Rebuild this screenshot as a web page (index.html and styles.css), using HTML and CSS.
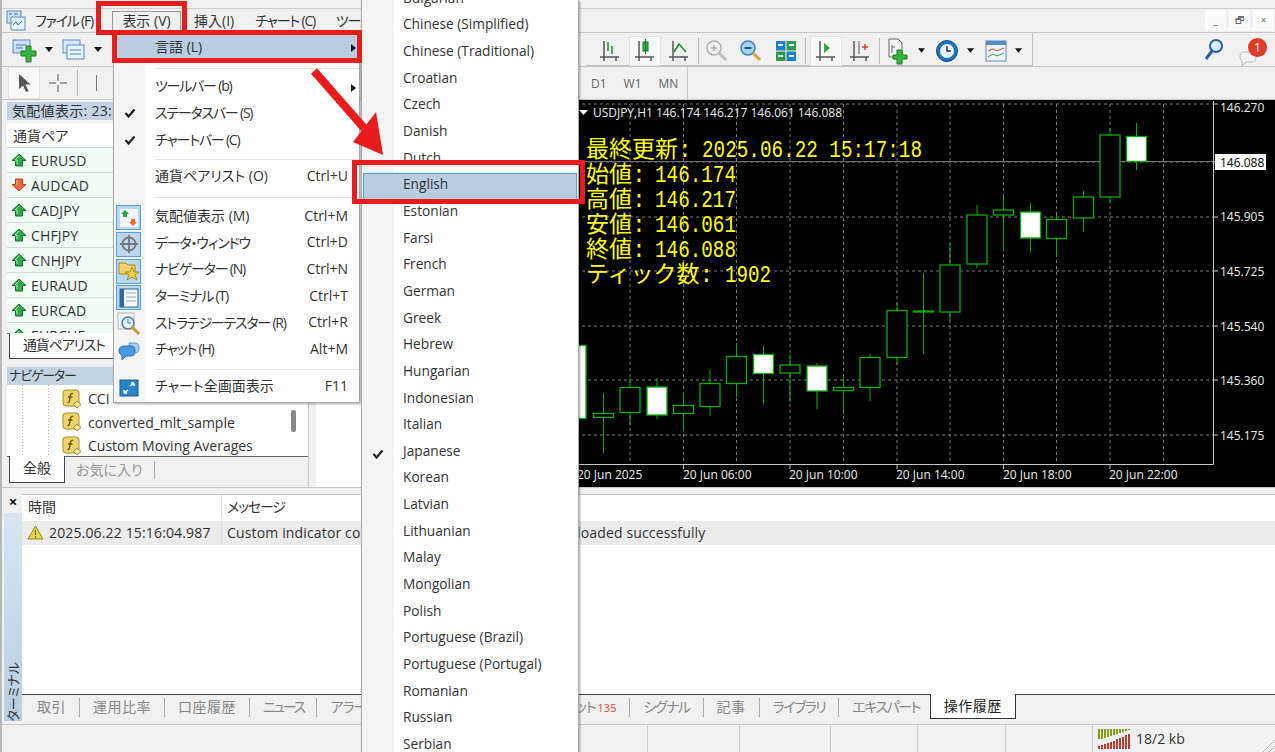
FILE: index.html
```html
<!DOCTYPE html>
<html lang="ja">
<head>
    <meta charset="UTF-8">
    <meta name="viewport" content="width=device-width, initial-scale=1.0">
    <title>MetaTrader</title>
    <link rel="stylesheet" href="styles.css">
</head>
<body>
<svg class="defs" width="0" height="0">
    <defs>
        <symbol id="arrow-up" viewBox="0 0 16 14"><path d="M8 1 15 7.500H11.500V13H4.500V7.500H1Z" fill="#2ea84a" stroke="#14702c"/><path d="M8 3 4 7H6V11" fill="none" stroke="#a8e8b0"/></symbol>
        <symbol id="arrow-down" viewBox="0 0 16 14"><path d="M8 13 15 6.500H11.500V1H4.500V6.500H1Z" fill="#ec6a3a" stroke="#b8401c"/><path d="M6 2V7" fill="none" stroke="#f8b898"/></symbol>
        <symbol id="func" viewBox="0 0 20 20"><rect x="1" y="1" width="16" height="16" rx="3" fill="#f0d468" stroke="#a88a28"/><path d="M11 4.500C8.500 4 8.500 6 8 9C7.500 12 7.500 14 5.500 13.500M6 8H10.500" fill="none" stroke="#6a5a18" stroke-width="1.400"/><path d="M15 12 19 15.500 15 19 11.500 15.500Z" fill="#f6e6a0" stroke="#a88a28"/></symbol>
        <symbol id="chart-axes" viewBox="0 0 22 22"><path d="M5 1V18M1 17H20M5 17V21M17 17V21" fill="none" stroke="#555" stroke-width="1.500"/></symbol>
        <symbol id="drop" viewBox="0 0 8 5"><path d="M0 0H8L4 5Z" fill="#111"/></symbol>
    </defs>
</svg>

<div class="app">
    <div class="title-strip"></div>

    <div class="menubar">
        <svg class="app-logo" width="22" height="22" viewBox="0 0 22 22"><rect x="2" y="1" width="14" height="12" fill="#cfe2f4" stroke="#5a8cc0"/><rect x="6" y="7" width="14" height="13" fill="#e8f2fb" stroke="#5a8cc0"/><path d="M8 15 11 12 13 15 17 11" fill="none" stroke="#3a70a8"/><path d="M4 4H7M9 4H13" stroke="#3a70a8"/></svg>
        <span class="menu-title file kana">ファイル (F)</span>
        <span class="menu-title open">表示 (V)</span>
        <span class="menu-title insert">挿入(I)</span>
        <span class="menu-title kana">チャート (C)</span>
        <span class="menu-title kana">ツール (T)</span>
        <div class="window-btns">
            <span class="window-btn">_</span>
            <span class="window-btn">🗗</span>
            <span class="window-btn">×</span>
        </div>
    </div>

    <div class="toolbar">
        <div class="tool-group">
            <svg class="tool tool-wide" width="26" height="26" viewBox="0 0 26 26"><rect x="2" y="3" width="17" height="13" fill="#cfe2f4" stroke="#5a8cc0"/><path d="M5 8H15M5 11H12" stroke="#4a7cb0"/><path d="M15 9H20V14H25V19H20V25H15V19H10V14H15Z" fill="#35b53a" stroke="#1e7c24"/></svg>
            <svg class="drop" width="8" height="5"><use href="#drop"/></svg>
            <svg class="tool tool-wide" width="24" height="24" viewBox="0 0 24 24"><rect x="1" y="2" width="17" height="13" fill="#d8e8f6" stroke="#5a8cc0"/><rect x="5" y="7" width="17" height="14" fill="#e8f2fb" stroke="#5a8cc0"/><path d="M8 12H19M8 16H19" stroke="#4a7cb0"/></svg>
            <svg class="drop" width="8" height="5"><use href="#drop"/></svg>
        </div>
        <div class="tool-right">
            <div class="tool-group chart-tools">
                <svg class="ct ct-a" width="22" height="24"><use href="#chart-axes"/><path d="M9 3V12M13 7V15" stroke="#1a8a2a" stroke-width="1.500"/></svg>
                <span class="ct-on ct-b"><svg width="22" height="24"><use href="#chart-axes"/><rect x="9" y="3" width="5" height="9" fill="#3ab54a" stroke="#14702c"/><path d="M11.500 0V15" stroke="#14702c"/></svg></span>
                <svg class="ct ct-c" width="22" height="24"><use href="#chart-axes"/><path d="M6 13 11 5 18 13" fill="none" stroke="#1a8a2a" stroke-width="1.500"/></svg>
                <i class="vsep"></i>
                <svg class="ct ct-d" width="24" height="24" viewBox="0 0 24 24"><circle cx="9" cy="9" r="7" fill="#f4f4f4" stroke="#b0b0b0" stroke-width="1.500"/><path d="M6 9H12M9 6V12" stroke="#b0b0b0" stroke-width="1.500"/><path d="M14 14 21 21" stroke="#c0c0c0" stroke-width="3"/></svg>
                <svg class="ct ct-e" width="24" height="24" viewBox="0 0 24 24"><circle cx="9" cy="9" r="7" fill="#a8d4f4" stroke="#3a80c0" stroke-width="1.500"/><path d="M5.500 9H12.500" stroke="#1a5a9a" stroke-width="2"/><path d="M14 14 21 21" stroke="#d8a838" stroke-width="3"/></svg>
                <svg class="ct ct-f" width="22" height="22" viewBox="0 0 22 22"><rect x="1" y="1" width="9.500" height="9.500" fill="#1f7fc8"/><rect x="11.500" y="1" width="9.500" height="9.500" fill="#2f9a4a"/><rect x="1" y="11.500" width="9.500" height="9.500" fill="#2f9a4a"/><rect x="11.500" y="11.500" width="9.500" height="9.500" fill="#1f7fc8"/><path d="M3 5H8M14 5H19M3 16H8M14 16H19" stroke="#dff" stroke-width="2"/></svg>
                <i class="vsep grip"></i>
                <span class="ct-on ct-g"><svg width="22" height="24"><use href="#chart-axes"/><path d="M9 4 15 9 9 14Z" fill="#2fa53f"/></svg></span>
                <svg class="ct ct-h" width="22" height="24"><use href="#chart-axes"/><path d="M10 2V15" stroke="#555"/><path d="M13 8H19M16 5V11" stroke="#d04a2a" stroke-width="1.500"/></svg>
                <i class="vsep"></i>
                <svg class="ct ct-i" width="24" height="28" viewBox="0 0 24 28"><path d="M3 2H12L16 6V20H3Z" fill="#f4f4f4" stroke="#666"/><path d="M6 8V16M6 10H9" stroke="#666"/><path d="M11 13H16V18H21V22H16V27H11V22H7V18H11Z" fill="#35b53a" stroke="#1e7c24"/></svg>
                <svg class="drop" width="7" height="5"><use href="#drop"/></svg>
                <svg class="ct ct-j" width="24" height="24" viewBox="0 0 24 24"><circle cx="12" cy="12" r="10.500" fill="#1f74b8" stroke="#134a80"/><circle cx="12" cy="12" r="7" fill="#e8f2fb"/><path d="M12 7V12H16" fill="none" stroke="#334" stroke-width="1.500"/></svg>
                <svg class="drop" width="7" height="5"><use href="#drop"/></svg>
                <svg class="ct ct-k" width="22" height="22" viewBox="0 0 22 22"><rect x="1" y="1" width="20" height="20" fill="#f0f4f8" stroke="#5a8cc0"/><rect x="1" y="1" width="20" height="4" fill="#5a8cc0"/><path d="M3 11 8 9 12 11 19 8" fill="none" stroke="#c05030"/><path d="M3 17 8 14 12 16 19 13" fill="none" stroke="#3aa04a"/></svg>
                <svg class="drop" width="7" height="5"><use href="#drop"/></svg>
            </div>
            <svg class="search-icon" width="22" height="24" viewBox="0 0 22 24"><circle cx="13" cy="8" r="6" fill="#dcecfa" stroke="#2a5fa8" stroke-width="2"/><path d="M9 13 3 21" stroke="#2a5fa8" stroke-width="3"/></svg>
            <div class="chat-badge">
                <svg width="20" height="20" viewBox="0 0 20 20"><path d="M4 4H13Q17 4 17 9T13 14H7L3 18V13Q1 11 1 9 1 4 4 4Z" fill="#eef2f4" stroke="#b8c0c4"/></svg>
                <span class="badge-dot">1</span>
            </div>
        </div>
    </div>

    <div class="toolbar toolbar-second">
        <span class="ct-on pointer"><svg width="16" height="20" viewBox="0 0 16 20"><path d="M3 1V16L7 12.500 10 19 12.500 18 9.500 11.500H14.500Z" fill="#555"/></svg></span>
        <svg class="crosshair" width="20" height="20" viewBox="0 0 20 20"><path d="M10 1V8M10 12V19M1 10H8M12 10H19" stroke="#888" stroke-width="1.500"/></svg>
        <i class="vsep"></i>
        <span class="draw-line"></span>
        <div class="periods">
            <span>D1</span><span>W1</span><span>MN</span>
        </div>
    </div>

    <div class="main">
        <div class="dock">
            <section class="watch">
                <div class="panel-title">気配値表示: 23:17:18</div>
                <div class="watch-table">
                    <div class="watch-head">通貨ペア</div>
                    <div class="watch-row"><svg width="16" height="14"><use href="#arrow-up"/></svg>EURUSD</div>
                    <div class="watch-row"><svg width="16" height="14"><use href="#arrow-down"/></svg>AUDCAD</div>
                    <div class="watch-row"><svg width="16" height="14"><use href="#arrow-up"/></svg>CADJPY</div>
                    <div class="watch-row"><svg width="16" height="14"><use href="#arrow-up"/></svg>CHFJPY</div>
                    <div class="watch-row"><svg width="16" height="14"><use href="#arrow-up"/></svg>CNHJPY</div>
                    <div class="watch-row"><svg width="16" height="14"><use href="#arrow-up"/></svg>EURAUD</div>
                    <div class="watch-row"><svg width="16" height="14"><use href="#arrow-up"/></svg>EURCAD</div>
                    <div class="watch-row"><svg width="16" height="14"><use href="#arrow-up"/></svg>EURCHF</div>
                </div>
                <div class="dock-tabs">
                    <span class="dock-tab active wide kana">通貨ペアリスト</span>
                </div>
            </section>
            <section class="navigator">
                <div class="panel-title nav-title kana">ナビゲーター</div>
                <div class="nav-tree">
                    <div class="nav-row"><svg width="20" height="20"><use href="#func"/></svg>CCI</div>
                    <div class="nav-row"><svg width="20" height="20"><use href="#func"/></svg>converted_mlt_sample</div>
                    <div class="nav-row"><svg width="20" height="20"><use href="#func"/></svg>Custom Moving Averages</div>
                    <span class="nav-thumb"></span>
                </div>
                <div class="dock-tabs">
                    <span class="dock-tab active">全般</span>
                    <span class="dock-tab">お気に入り</span>
                </div>
            </section>
        </div>
        <div class="blank-pane"></div>
        <div class="chart">
            <svg width="699" height="387" viewBox="576 100 699 387">
                <g class="grid">
                    <path d="M576 104H1213M576 162H1213M576 217H1213M576 271H1213M576 326H1213M576 380H1213M576 435H1213"/>
                    <path d="M630 104V464M683.500 104V464M736.500 104V464M790 104V464M843.500 104V464M897 104V464M950 104V464M1003.500 104V464M1056.500 104V464M1110 104V464M1163.500 104V464"/>
                </g>
                <path class="price-line" d="M576 161.500H1213"/>
                <path class="wick" d="M603.500 393V453M630 378V425M657 378V419M683.500 392V430M710 369V416M736.500 343V397M763.500 346V404M790 354V402M817 363V409M843.500 378V414M870 354V401M897 303V365M923.500 273V354M950 243V320M977 205V268M1003.500 196V251M1030.500 203V252M1056.500 215V255M1083.500 191V232M1110 128V203M1136.500 123V170"/>
                <g class="bear">
                    <rect x="566" y="345.500" width="20" height="73"/>
                    <rect x="647" y="387" width="20" height="28"/>
                    <rect x="753.500" y="354.500" width="20" height="19"/>
                    <rect x="807" y="366" width="20" height="25"/>
                    <rect x="1020.500" y="212" width="20" height="26"/>
                    <rect x="1126.500" y="136.500" width="20" height="25"/>
                </g>
                <g class="bull">
                    <rect x="593.500" y="413.500" width="20" height="4"/>
                    <rect x="620" y="387.500" width="20" height="25"/>
                    <rect x="673.500" y="405.500" width="20" height="8"/>
                    <rect x="700" y="383.500" width="20" height="23"/>
                    <rect x="726.500" y="356.500" width="20" height="27"/>
                    <rect x="780" y="365" width="20" height="8"/>
                    <rect x="833.500" y="387.500" width="20" height="3"/>
                    <rect x="860" y="357.500" width="20" height="30"/>
                    <rect x="887" y="310.500" width="20" height="47"/>
                    <rect x="913.500" y="311" width="20" height="1"/>
                    <rect x="940" y="265" width="20" height="47"/>
                    <rect x="967" y="215" width="20" height="49"/>
                    <rect x="993.500" y="210" width="20" height="5"/>
                    <rect x="1046.500" y="219.500" width="20" height="19"/>
                    <rect x="1073.500" y="197" width="20" height="21"/>
                    <rect x="1100" y="135" width="20" height="62"/>
                </g>
                <path class="axis" d="M1213.500 101V464.500H576M1213 104H1218M1213 162H1218M1213 217H1218M1213 271H1218M1213 326H1218M1213 380H1218M1213 435H1218M683.500 464V469M790 464V469M897 464V469M1003.500 464V469M1110 464V469"/>
                <path class="header-mark" d="M579 110H588L583.500 115Z"/>
                <text class="chart-label" x="593" y="117" textLength="249">USDJPY,H1  146.174 146.217 146.061 146.088</text>
                <g class="chart-label">
                    <text x="1220" y="112">146.270</text>
                    <text x="1220" y="221">145.905</text>
                    <text x="1220" y="276">145.725</text>
                    <text x="1220" y="331">145.540</text>
                    <text x="1220" y="385">145.360</text>
                    <text x="1220" y="440">145.175</text>
                    <text x="577" y="479">20 Jun 2025</text>
                    <text x="683" y="479">20 Jun 06:00</text>
                    <text x="789" y="479">20 Jun 10:00</text>
                    <text x="896" y="479">20 Jun 14:00</text>
                    <text x="1003" y="479">20 Jun 18:00</text>
                    <text x="1109" y="479">20 Jun 22:00</text>
                </g>
                <rect class="price-box" x="1215" y="154" width="51" height="16"/>
                <text class="price-text" x="1220" y="166.500">146.088</text>
                <g class="info">
                    <text x="586" y="157">最終更新:</text>
                    <text x="702" y="157" textLength="220" lengthAdjust="spacingAndGlyphs">2025.06.22 15:17:18</text>
                    <text x="586" y="182">始値:</text>
                    <text x="655" y="182" textLength="81" lengthAdjust="spacingAndGlyphs">146.174</text>
                    <text x="586" y="207">高値:</text>
                    <text x="655" y="207" textLength="81" lengthAdjust="spacingAndGlyphs">146.217</text>
                    <text x="586" y="232">安値:</text>
                    <text x="655" y="232" textLength="81" lengthAdjust="spacingAndGlyphs">146.061</text>
                    <text x="586" y="257">終値:</text>
                    <text x="655" y="257" textLength="81" lengthAdjust="spacingAndGlyphs">146.088</text>
                    <text x="586" y="282" class="full">ティック数:</text>
                    <text x="725" y="282" textLength="46" lengthAdjust="spacingAndGlyphs">1902</text>
                </g>
            </svg>
        </div>
    </div>

    <div class="terminal">
        <div class="term-side">
            <span class="term-close">×</span>
            <div class="term-label"><span>ターミナル</span></div>
        </div>
        <div class="term-body">
            <div class="log-head">
                <span class="col-time">時間</span>
                <span class="col-msg kana">メッセージ</span>
            </div>
            <div class="log-row">
                <span class="col-time">
                    <svg width="17" height="15" viewBox="0 0 17 15"><path d="M8.500 1 16 14H1Z" fill="#e4d83c" stroke="#8c8a20"/><path d="M8.500 5V10M8.500 11V13" stroke="#555"/></svg>
                    2025.06.22 15:16:04.987
                </span>
                <span class="col-msg"><span class="msg-start">Custom indicator converted_mlt_sample</span>loaded successfully</span>
            </div>
            <div class="log-empty"></div>
            <div class="term-tabs">
                <span class="term-tab">取引</span>
                <span class="term-tab">運用比率</span>
                <span class="term-tab">口座履歴</span>
                <span class="term-tab news">ニュース</span>
                <span class="term-tab hidden-tab">アラート</span>
                <span class="term-tab chat-tab">チャット<b>135</b></span>
                <span class="term-tab tight">シグナル</span>
                <span class="term-tab">記事</span>
                <span class="term-tab tight">ライブラリ</span>
                <span class="term-tab tight last">エキスパート</span>
                <span class="term-tab active">操作履歴</span>
            </div>
        </div>
    </div>

    <div class="statusbar">
        <span class="status-cell"></span>
        <span class="status-cell"></span>
        <span class="status-cell"></span>
        <span class="status-cell"></span>
        <span class="status-cell"></span>
        <span class="status-cell net">
            <svg width="34" height="24" viewBox="0 0 34 24"><path d="M2 2V12M5 2V12M8 2V11M11 2V10M14 2V9M17 2V8M20 2V7M23 2V6M26 2V5M29 2V4M32 2V3" stroke="#7a9400" stroke-width="1.800"/><path d="M2 19V22M5 18V22M8 17V22M11 16V22M14 15V22M17 14V22M20 12V22M23 11V22M26 10V22M29 8V22M32 7V22" stroke="#a82a1a" stroke-width="1.800"/></svg>
            18/2 kb
        </span>
        <span class="resize-grip"></span>
    </div>

    <!-- 表示メニュー -->
    <div class="menu view-menu">
        <div class="menu-row current"><span class="menu-label">言語 (L)</span><i class="sub-arrow"></i></div>
        <div class="menu-sep"></div>
        <div class="menu-row"><span class="menu-label kana">ツールバー (b)</span><i class="sub-arrow"></i></div>
        <div class="menu-row">
            <svg class="check" width="12" height="10" viewBox="0 0 12 10"><path d="M1.500 5 4.500 8.500 10.500 1.500" fill="none" stroke="#222" stroke-width="2.200"/></svg>
            <span class="menu-label kana">ステータスバー (S)</span>
        </div>
        <div class="menu-row">
            <svg class="check" width="12" height="10" viewBox="0 0 12 10"><path d="M1.500 5 4.500 8.500 10.500 1.500" fill="none" stroke="#222" stroke-width="2.200"/></svg>
            <span class="menu-label kana">チャートバー (C)</span>
        </div>
        <div class="menu-sep short"></div>
        <div class="menu-row"><span class="menu-label">通貨ペアリスト (O)</span><span class="shortcut">Ctrl+U</span></div>
        <div class="menu-sep"></div>
        <div class="menu-row">
            <span class="menu-icon boxed"><svg width="20" height="20" viewBox="0 0 20 20"><rect x="1" y="1" width="18" height="18" fill="#f4f8fb"/><path d="M6 2 10 6H8V9H4V6H2Z" fill="#2ea84a"/><path d="M14 18 10 14H12V11H16V14H18Z" fill="#ec6a3a"/></svg></span>
            <span class="menu-label">気配値表示 (M)</span><span class="shortcut">Ctrl+M</span>
        </div>
        <div class="menu-row">
            <span class="menu-icon boxed"><svg width="20" height="20" viewBox="0 0 20 20"><circle cx="10" cy="10" r="6.500" fill="none" stroke="#777" stroke-width="1.800"/><path d="M10 1V19M1 10H19" stroke="#777" stroke-width="1.800"/></svg></span>
            <span class="menu-label kana">データ・ウィンドウ</span><span class="shortcut">Ctrl+D</span>
        </div>
        <div class="menu-row">
            <span class="menu-icon boxed"><svg width="22" height="22" viewBox="0 0 22 22"><path d="M1 3H8L10 5H17V14H1Z" fill="#f0d468" stroke="#a88a28"/><path d="M14 7 16 12H21L17 15 19 20 14 17 9 20 11 15 7 12H12Z" fill="#f4d43c" stroke="#a88a28"/></svg></span>
            <span class="menu-label kana">ナビゲーター (N)</span><span class="shortcut">Ctrl+N</span>
        </div>
        <div class="menu-row">
            <span class="menu-icon boxed"><svg width="20" height="20" viewBox="0 0 20 20"><rect x="1" y="1" width="18" height="18" fill="#f4f8fb" stroke="#2a6aa8"/><rect x="1" y="1" width="4" height="18" fill="#2a6aa8"/><path d="M7 5H17M7 9H17M7 13H17" stroke="#9ab"/></svg></span>
            <span class="menu-label kana">ターミナル (T)</span><span class="shortcut">Ctrl+T</span>
        </div>
        <div class="menu-row">
            <span class="menu-icon"><svg width="24" height="24" viewBox="0 0 24 24"><rect x="1" y="1" width="16" height="16" fill="#eef2f6" stroke="#b8b8b8"/><circle cx="11" cy="11" r="6" fill="#dcecfa" stroke="#5a7a9a" stroke-width="1.500"/><path d="M11 7V11H14" fill="none" stroke="#5a7a9a"/><path d="M15 15 22 22" stroke="#c89a38" stroke-width="3"/></svg></span>
            <span class="menu-label kana">ストラテジーテスター (R)</span><span class="shortcut">Ctrl+R</span>
        </div>
        <div class="menu-row">
            <span class="menu-icon"><svg width="22" height="22" viewBox="0 0 22 22"><path d="M11 3H17Q21 3 21 8T17 13H11Z" fill="#a8d0f0" stroke="#5a98d0"/><path d="M6 6H13Q17 6 17 11T13 16H8L4 20V15Q1 14 1 11 1 6 6 6Z" fill="#4a9ade" stroke="#2a70b0"/></svg></span>
            <span class="menu-label kana">チャット (H)</span><span class="shortcut">Alt+M</span>
        </div>
        <div class="menu-sep short"></div>
        <div class="menu-row">
            <span class="menu-icon"><svg width="20" height="18" viewBox="0 0 20 18"><rect x="1" y="1" width="18" height="16" fill="#2a82c8" stroke="#1a5a98"/><path d="M11 7 15 4M15 4H12M15 4V7M9 11 5 14M5 14H8M5 14V11" stroke="#fff" stroke-width="1.400" fill="none"/></svg></span>
            <span class="menu-label">チャート全画面表示</span><span class="shortcut">F11</span>
        </div>
    </div>

    <!-- 言語サブメニュー -->
    <div class="menu lang-menu">
        <div class="lang-list">
            <div class="lang-row">Bulgarian</div>
            <div class="lang-row">Chinese (Simplified)</div>
            <div class="lang-row">Chinese (Traditional)</div>
            <div class="lang-row">Croatian</div>
            <div class="lang-row">Czech</div>
            <div class="lang-row">Danish</div>
            <div class="lang-row">Dutch</div>
            <div class="lang-row current">English</div>
            <div class="lang-row">Estonian</div>
            <div class="lang-row">Farsi</div>
            <div class="lang-row">French</div>
            <div class="lang-row">German</div>
            <div class="lang-row">Greek</div>
            <div class="lang-row">Hebrew</div>
            <div class="lang-row">Hungarian</div>
            <div class="lang-row">Indonesian</div>
            <div class="lang-row">Italian</div>
            <div class="lang-row">
                <svg class="check" width="12" height="10" viewBox="0 0 12 10"><path d="M1.500 5 4.500 8.500 10.500 1.500" fill="none" stroke="#222" stroke-width="2.200"/></svg>
                Japanese
            </div>
            <div class="lang-row">Korean</div>
            <div class="lang-row">Latvian</div>
            <div class="lang-row">Lithuanian</div>
            <div class="lang-row">Malay</div>
            <div class="lang-row">Mongolian</div>
            <div class="lang-row">Polish</div>
            <div class="lang-row">Portuguese (Brazil)</div>
            <div class="lang-row">Portuguese (Portugal)</div>
            <div class="lang-row">Romanian</div>
            <div class="lang-row">Russian</div>
            <div class="lang-row">Serbian</div>
        </div>
    </div>

    <!-- 赤枠と矢印 -->
    <span class="callout callout-view"></span>
    <span class="callout callout-lang"></span>
    <span class="callout callout-english"></span>
    <svg class="callout-arrow" width="90" height="100" viewBox="0 0 90 100"><path d="M4 5 54 62" stroke="#e81c1c" stroke-width="8" fill="none"/><path d="M73 89 66 46 43 76Z" fill="#e81c1c"/></svg>
</div>
</body>
</html>
```

FILE: styles.css
```css
* {
    box-sizing: border-box;
}
html, body {
    margin: 0;
    height: 100%;
    overflow: hidden;
}
body {
    font-family: "Open Sans", "Noto Sans CJK JP", sans-serif;
    font-size: 14px;
    font-feature-settings: "palt";
    color: #333;
    background-color: #f0f0f0;
}
.defs {
    position: absolute;
}
.kana {
    letter-spacing: -1.200px;
}
.app {
    position: relative;
    width: 1275px;
    height: 752px;
    overflow: hidden;
    display: flex;
    flex-direction: column;
    background-color: #f0f0f0;
    border-left: 2px solid #b8b8b8;
}
.title-strip {
    height: 9px;
    border-bottom: 1px solid #d0d0d0;
}

/* menu bar */
.menubar {
    height: 24px;
    display: flex;
    align-items: center;
    border-bottom: 1px solid #c8c8c8;
}
.app-logo {
    margin: 0 8px 0 3px;
}
.menu-title {
    white-space: nowrap;
    margin-right: 21px;
    line-height: 18px;
}
.menu-title.file {
    width: 77px;
    margin-right: 0;
    overflow: hidden;
}
.menu-title.open {
    width: 69px;
    margin-right: 13px;
    text-align: center;
    border: 1px solid #999;
    border-bottom: none;
}
.menu-title.insert {
    margin-right: 21px;
}
.window-btns {
    margin-left: auto;
    display: flex;
    gap: 3px;
    padding-right: 1px;
    position: relative;
}
.window-btn {
    width: 21px;
    height: 21px;
    background-color: #fafafa;
    text-align: center;
    font-size: 10px;
    line-height: 20px;
    color: #666;
}

/* toolbars */
.toolbar {
    height: 34px;
    display: flex;
    align-items: center;
    border-bottom: 1px solid #c8c8c8;
}
.tool-group {
    display: flex;
    align-items: center;
}
.tool-wide {
    margin-left: 9px;
}
.drop {
    margin-left: 8px;
}
.tool-right {
    margin-left: auto;
    display: flex;
    align-items: center;
    height: 100%;
}
.chart-tools {
    height: 100%;
    width: 447px;
    margin-right: 242px;
    padding: 3px 0 0 13px;
    border-right: 1px solid #c0c0c0;
    border-bottom: 1px solid #c0c0c0;
}
.ct {
    flex: none;
}
.ct-on {
    width: 32px;
    height: 30px;
    display: flex;
    align-items: center;
    justify-content: center;
    background-color: #f8f8f8;
    border: 1px solid #e4e4e4;
}
.ct-a { margin-right: 8px; }
.ct-c { margin-left: 7px; }
.vsep {
    width: 1px;
    height: 26px;
    margin: 0 6px 0 8px;
    background-color: #b8b8b8;
}
.vsep.grip {
    margin: 0 4px 0 8px;
}
.ct-d { margin: 0 10px 0 0; }
.ct-e { margin: 0 12px 0 0; }
.ct-f { margin: 0; }
.ct-h { margin-left: 7px; }
.ct-j { margin-left: 10px; }
.ct-k { margin-left: 11px; }
.search-icon {
    position: absolute;
    right: 50px;
    top: 38px;
}
.chat-badge {
    position: absolute;
    right: 6px;
    top: 38px;
    width: 30px;
    height: 28px;
}
.chat-badge svg {
    position: absolute;
    left: 0;
    top: 10px;
}
.badge-dot {
    position: absolute;
    left: 9px;
    top: 0;
    width: 19px;
    height: 19px;
    border-radius: 50%;
    background-color: #e03a28;
    color: #fff;
    font-size: 13px;
    line-height: 19px;
    text-align: center;
}
.toolbar-second {
    height: 33px;
    padding-left: 6px;
}
.pointer {
    width: 32px;
    height: 32px;
}
.crosshair {
    margin-left: 8px;
}
.toolbar-second .vsep {
    margin: 0 18px 0 9px;
}
.draw-line {
    width: 1px;
    height: 16px;
    background-color: #777;
}
.periods {
    display: flex;
    gap: 17px;
    margin-left: 494px;
    padding-right: 9px;
    height: 100%;
    align-items: center;
    border-right: 1px solid #c8c8c8;
    font-size: 12px;
    color: #666;
}

/* main area */
.main {
    height: 387px;
    display: flex;
}
.dock {
    width: 307px;
    padding: 2px 0 0 5px;
    border-right: 1px solid #c8c8c8;
    flex: none;
}
.panel-title {
    height: 18px;
    line-height: 17px;
    padding-left: 5px;
    letter-spacing: 0.3px;
    background-color: #c4d3e2;
    white-space: nowrap;
    overflow: hidden;
}
.nav-title {
    font-size: 13px;
    padding-left: 2px;
    letter-spacing: -1.200px;
}
.watch {
    height: 256px;
    display: flex;
    flex-direction: column;
}
.watch-table {
    margin-top: 3px;
    flex: 1;
    overflow: hidden;
    background-color: #fff;
}
.watch-head {
    height: 25px;
    padding-left: 6px;
    line-height: 25px;
    border-bottom: 1px solid #d8d8d8;
}
.watch-row {
    height: 25px;
    display: flex;
    align-items: center;
    gap: 4px;
    padding-left: 4px;
    letter-spacing: 0.15px;
    background-color: #f0fbf6;
    border-bottom: 1px solid #d8d8d8;
}
.dock-tabs {
    height: 25px;
    display: flex;
    align-items: flex-start;
    flex: none;
    border-top: 1px solid #666;
}
.dock-tab {
    padding: 0 11px;
    color: #999;
    border-right: 1px solid #aaa;
    margin-top: 4px;
    height: 18px;
    line-height: 18px;
}
.dock-tab.active {
    margin: -1px 0 0 2px;
    height: 26px;
    line-height: 24px;
    padding: 0 12px;
    color: #333;
    background-color: #fff;
    border: 1px solid #444;
    border-top: none;
}
.dock-tab.wide {
    padding: 0 13px;
}
.navigator {
    margin-top: 9px;
}
.nav-tree {
    position: relative;
    height: 71px;
    padding: 2px 0 0 55px;
    background-color: #fff;
    background-image: linear-gradient(#bbb 50%, transparent 50%), linear-gradient(#bbb 50%, transparent 50%);
    background-size: 1px 3px;
    background-repeat: repeat-y;
    background-position: 15px 0, 41px 0;
    overflow: hidden;
}
.nav-row {
    height: 23.500px;
    display: flex;
    align-items: center;
    gap: 6px;
}
.nav-thumb {
    position: absolute;
    left: 284px;
    top: 25px;
    width: 5px;
    height: 22px;
    border-radius: 2px;
    background-color: #888;
}
.navigator .dock-tabs {
    height: 27px;
}
.navigator .dock-tab.active {
    width: 56px;
    height: 27px;
    text-align: center;
}
.blank-pane {
    width: 260px;
    margin-left: 7px;
    background-color: #fff;
    flex: none;
}
.chart {
    flex: 1;
    background-color: #000;
    overflow: hidden;
}
.chart svg {
    display: block;
    font-family: "Open Sans", sans-serif;
}
.grid path {
    fill: none;
    stroke: #7c7c7c;
    stroke-dasharray: 3 3;
}
.price-line {
    stroke: #66706f;
}
.wick {
    stroke: #00b000;
    fill: none;
}
.bear rect {
    fill: #fff;
    stroke: #00b000;
    stroke-width: 1.300;
}
.bull rect {
    fill: #000;
    stroke: #00b000;
    stroke-width: 1.300;
}
.axis {
    fill: none;
    stroke: #c8c8c8;
}
.header-mark {
    fill: #fff;
}
.chart-label {
    fill: #eee;
    font-size: 12px;
}
.price-box {
    fill: #fff;
}
.price-text {
    fill: #000;
    font-size: 12px;
}
.info text {
    fill: #ff0;
    font-family: "Liberation Mono", "Noto Sans CJK JP", monospace;
    font-feature-settings: normal;
    font-size: 23px;
}

/* terminal */
.terminal {
    height: 238px;
    padding: 6px 0 3px 2px;
    display: flex;
    border-top: 1px solid #c8c8c8;
    border-bottom: 1px solid #c8c8c8;
}
.term-side {
    width: 18px;
    display: flex;
    flex-direction: column;
    flex: none;
}
.term-close {
    height: 19px;
    text-align: center;
    font-weight: bold;
    font-size: 15px;
    line-height: 14px;
    color: #111;
}
.term-label {
    flex: 1;
    background: linear-gradient(#d8e6f2, #b8cde0);
    display: flex;
    align-items: flex-end;
    justify-content: center;
}
.term-label span {
    writing-mode: vertical-rl;
    text-orientation: sideways;
    transform: rotate(180deg);
    font-size: 13px;
    line-height: 17px;
}
.term-body {
    flex: 1;
    display: flex;
    flex-direction: column;
    background-color: #fff;
    border-top: 1px solid #c8c8c8;
}
.log-head, .log-row {
    display: flex;
    align-items: center;
}
.log-head {
    height: 26px;
    padding-bottom: 3px;
}
.log-row {
    height: 24px;
    letter-spacing: 0.15px;
    background-color: #ebebeb;
}
.col-time {
    width: 200px;
    flex: none;
    display: flex;
    align-items: center;
    gap: 5px;
    padding: 0 0 2px 6px;
    height: 100%;
    border-right: 1px solid #ddd;
    white-space: nowrap;
}
.log-row .col-time {
    padding-left: 5px;
}
.col-msg {
    padding: 0 0 2px 5px;
    white-space: nowrap;
}
.msg-start {
    display: inline-block;
    width: 350px;
    overflow: hidden;
    vertical-align: bottom;
}
.log-empty {
    flex: 1;
    border-bottom: 1px solid #444;
}
.term-tabs {
    height: 26px;
    display: flex;
    align-items: flex-start;
    background-color: #f0f0f0;
}
.term-tab {
    padding: 0 13px;
    margin-top: 3px;
    height: 19px;
    line-height: 18px;
    letter-spacing: 0.5px;
    color: #888;
    border-right: 1px solid #aaa;
    white-space: nowrap;
}
.term-tab:first-child {
    padding-left: 15px;
}
.term-tab.news {
    letter-spacing: -2.500px;
}
.term-tab.tight {
    letter-spacing: -1.500px;
}
.term-tab.hidden-tab {
    width: 239px;
    letter-spacing: -1px;
}
.term-tab.chat-tab {
    width: 74px;
    direction: rtl;
    overflow: hidden;
    letter-spacing: -1px;
}
.term-tab b {
    font-weight: normal;
    font-size: 11px;
    letter-spacing: 0;
    color: #e84040;
    margin-left: 2px;
}
.term-tab.last {
    padding-right: 10px;
    border-right: none;
}
.term-tab.active {
    margin-top: -1px;
    height: 25px;
    line-height: 24px;
    padding: 0 13px;
    color: #222;
    background-color: #fff;
    border: 1px solid #333;
    border-top: none;
}

/* status bar */
.statusbar {
    position: relative;
    flex: 1;
    display: grid;
    grid-template-columns: 92px 91px 87px 88px 87px 1fr;
    margin-left: 645px;
}
.status-cell {
    border-left: 1px solid #ccc;
}
.status-cell.net {
    display: flex;
    align-items: center;
    gap: 5px;
    padding-left: 4px;
}
.resize-grip {
    position: absolute;
    right: 0;
    bottom: 0;
    width: 14px;
    height: 14px;
    background: repeating-linear-gradient(135deg, transparent 0 3px, #bbb 3px 4px);
    clip-path: polygon(100% 0, 100% 100%, 0 100%);
}

/* overlay menus */
.menu {
    position: absolute;
    background-color: #fff;
    background-image: linear-gradient(#f4f4f4, #f4f4f4);
    background-repeat: repeat-y;
    box-shadow: 1px 1px 2px rgba(0,0,0,0.35);
}
.view-menu {
    left: 111px;
    top: 33px;
    width: 247px;
    height: 370px;
    padding-top: 1px;
    background-size: 31px 100%;
    border: 1px solid #a8a8a8;
}
.menu-row {
    position: relative;
    height: 26.670px;
    display: flex;
    align-items: center;
    padding: 0 11px 5px 41px;
}
.menu-row.current {
    background-color: #b8cde0;
}
.menu-label {
    white-space: nowrap;
}
.shortcut {
    margin-left: auto;
}
.menu-sep {
    height: 13px;
    display: flex;
    align-items: center;
}
.menu-sep.short {
    height: 10px;
}
.menu-sep::after {
    content: "";
    width: 100%;
    margin-left: 41px;
    height: 1px;
    background-color: #e6e6e6;
}
.sub-arrow {
    position: absolute;
    right: 3px;
    top: 9px;
    border-left: 5px solid #111;
    border-top: 4px solid transparent;
    border-bottom: 4px solid transparent;
}
.menu .check {
    position: absolute;
    left: 10px;
    top: 7px;
}
.menu-icon {
    position: absolute;
    left: 2px;
    top: 1px;
    width: 25px;
    height: 25px;
    display: flex;
    align-items: center;
    justify-content: center;
}
.menu-icon.boxed {
    background-color: #bcd6ee;
    border: 1px solid #5aa0dc;
}
.lang-menu {
    left: 359px;
    top: 0;
    width: 218px;
    height: 752px;
    overflow: hidden;
    font-size: 13.700px;
    background-size: 32px 100%;
    border-left: 1px solid #a8a8a8;
    border-right: 1px solid #a8a8a8;
}
.lang-list {
    margin-top: -13.330px;
}
.lang-row {
    position: relative;
    height: 26.670px;
    line-height: 21.700px;
    padding-left: 41px;
    white-space: nowrap;
}
.lang-row.current {
    margin: 0 1px;
    padding-left: 39px;
    line-height: 20px;
    background-color: #b8cde0;
    border: 1px solid #5aa0dc;
}
.lang-row .check {
    left: 10px;
    top: 9px;
}

/* annotations */
.callout {
    position: absolute;
    border: 5px solid #e81c1c;
}
.callout-view {
    left: 94px;
    top: 1px;
    width: 91px;
    height: 34px;
}
.callout-lang {
    left: 110px;
    top: 30px;
    width: 250px;
    height: 33px;
}
.callout-english {
    left: 350px;
    top: 160px;
    width: 233px;
    height: 44px;
}
.callout-arrow {
    position: absolute;
    left: 308px;
    top: 66px;
}
```
